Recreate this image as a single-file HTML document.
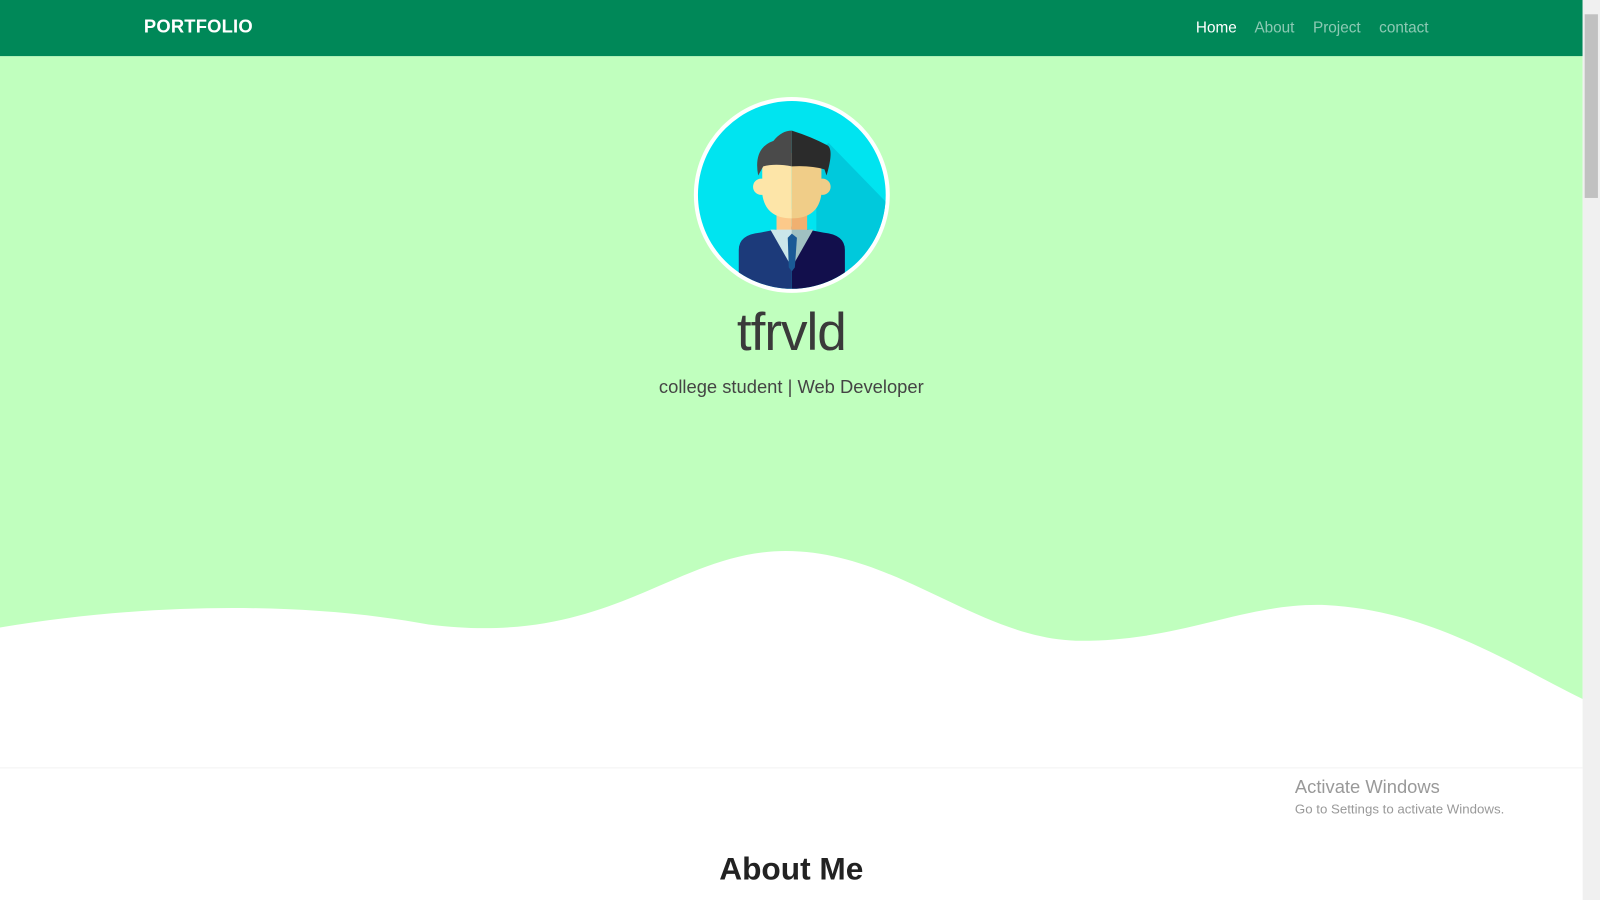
<!DOCTYPE html>
<html><head><meta charset="utf-8"><style>
*{margin:0;padding:0;box-sizing:border-box}
html,body{width:1600px;height:900px;overflow:hidden;background:#fff}
#w{width:1568px;height:882px;position:relative;transform:scale(1.0204);transform-origin:0 0;font-family:"Liberation Sans",sans-serif}
nav{position:absolute;left:0;top:0;width:1551px;height:55px;background:#008858}
.brand{position:absolute;left:141px;top:16px;color:#fff;font-weight:bold;font-size:18px;letter-spacing:0.2px}
.links{position:absolute;top:19px;left:1172px;font-size:15px;color:rgba(255,255,255,.55)}
.links span{margin-right:14px}
.links .a{color:#fff}
.hero{position:absolute;left:0;top:55px;width:1551px;height:697px;background:#c0ffbe}
h1{position:absolute;left:0;width:1551px;top:296px;text-align:center;font-weight:normal;font-size:52px;color:#3a3a3a;letter-spacing:-1px}
.sub{position:absolute;left:0;width:1551px;top:369px;text-align:center;font-size:18px;font-weight:normal;color:#444}
h2{position:absolute;left:0;width:1551px;top:834px;text-align:center;font-size:31px;font-weight:bold;color:#222}
.sb{position:absolute;left:1551px;top:0;width:17px;height:882px;background:#f0f0f0}
.th{position:absolute;left:2px;top:14px;width:13px;height:180px;background:#c1c1c1}
.win{position:absolute;left:1269px;top:761px;color:#999;font-size:18px}
.win small{display:block;font-size:13px;margin-top:3px}
</style></head><body><div id="w">
<div class="hero"></div>
<svg style="position:absolute;left:0;top:0" width="1551" height="882">
<path d="M0 615 C150 590 300 590 420 612 C600 635 660 540 770 540 C880 540 960 628 1060 628 C1160 628 1220 590 1300 593 C1400 598 1480 650 1551 685 L1551 753 L0 753Z" fill="#fff"/>
<line x1="0" y1="752.5" x2="1551" y2="752.5" stroke="#f2f2f2"/>
<defs><clipPath id="c"><circle cx="776" cy="191" r="92"/></clipPath></defs>
<circle cx="776" cy="191" r="96" fill="#fff"/>
<circle cx="776" cy="191" r="92" fill="#00e4f0"/>
<g clip-path="url(#c)">
<path d="M812 140 L880 210 L880 300 L800 300 L800 150Z" fill="#00c9dc"/>
<path d="M724 245 Q724 230 745 228 L776 222 L776 290 L724 290Z" fill="#1c3a7a"/>
<path d="M776 222 L807 228 Q828 230 828 245 L828 290 L776 290Z" fill="#120f4c"/>
<rect x="761" y="205" width="15" height="24" fill="#fcc98a"/>
<rect x="776" y="205" width="15" height="24" fill="#f0b070"/>
<path d="M755 225 L776 225 L776 262Z" fill="#cbe6ea"/>
<path d="M797 225 L776 225 L776 262Z" fill="#a0c1c2"/>
<path d="M772 233 L776 229 L781 233 L779 262 L776 266 L773 262Z" fill="#1a5a96"/>
<circle cx="746" cy="183" r="8" fill="#fde5a8"/><circle cx="806" cy="183" r="8" fill="#f0cd88"/>
<path d="M776 150 L776 214 Q750 214 747 190 L747 155Z" fill="#fde5a8"/>
<path d="M776 150 L776 214 Q802 214 805 190 L805 155Z" fill="#f0cd88"/>
<path d="M776 128 L776 163 Q760 160 748 163 L743 172 Q738 145 758 138 Q766 128 776 128Z" fill="#4a4a4a"/>
<path d="M776 128 L776 163 Q795 162 808 166 L810 172 Q818 145 810 142 Q795 134 776 128Z" fill="#2b2b2b"/>
</g>
</svg>
<nav><div class="brand">PORTFOLIO</div><div class="links"><span class="a">Home</span> <span>About</span> <span>Project</span> <span>contact</span></div></nav>
<h1>tfrvld</h1>
<div class="sub">college student | Web Developer</div>
<h2>About Me</h2>
<div class="win">Activate Windows<small>Go to Settings to activate Windows.</small></div>
<div class="sb"><div class="th"></div></div>
</div></body></html>
